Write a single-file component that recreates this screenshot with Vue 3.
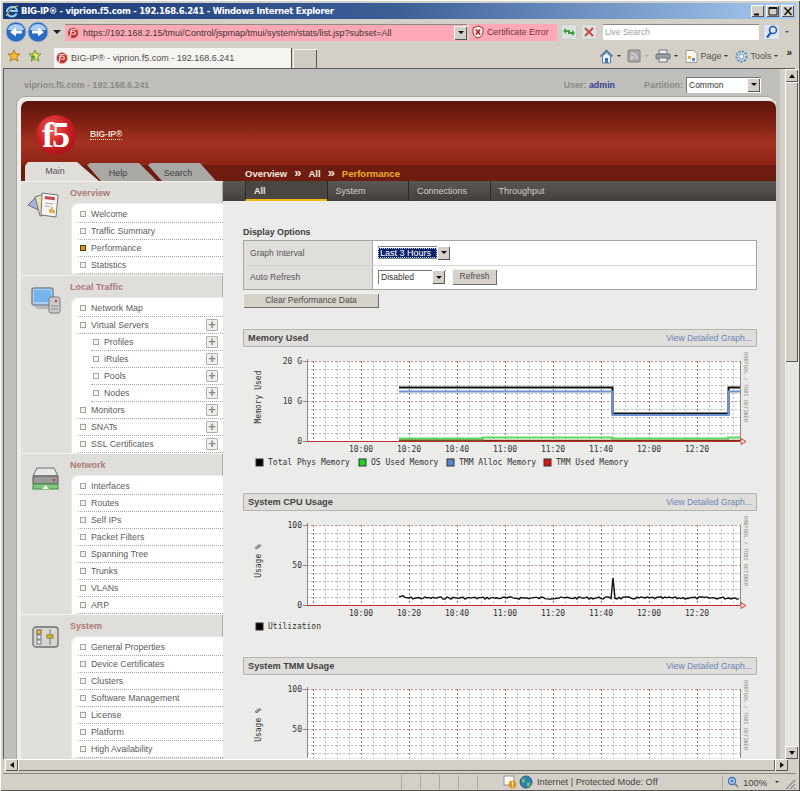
<script setup>
const sections = [
  { title: 'Overview', icon: 'docs', extra: true, items: [
    { t: 'Welcome' }, { t: 'Traffic Summary' }, { t: 'Performance', on: true }, { t: 'Statistics' } ] },
  { title: 'Local Traffic', icon: 'monitor', items: [
    { t: 'Network Map' }, { t: 'Virtual Servers', plus: true }, { t: 'Profiles', plus: true, sub: true },
    { t: 'iRules', plus: true, sub: true }, { t: 'Pools', plus: true, sub: true }, { t: 'Nodes', plus: true, sub: true },
    { t: 'Monitors', plus: true }, { t: 'SNATs', plus: true }, { t: 'SSL Certificates', plus: true } ] },
  { title: 'Network', icon: 'server', items: [
    { t: 'Interfaces' }, { t: 'Routes' }, { t: 'Self IPs' }, { t: 'Packet Filters' },
    { t: 'Spanning Tree' }, { t: 'Trunks' }, { t: 'VLANs' }, { t: 'ARP' } ] },
  { title: 'System', icon: 'system', items: [
    { t: 'General Properties' }, { t: 'Device Certificates' }, { t: 'Clusters' }, { t: 'Software Management' },
    { t: 'License' }, { t: 'Platform' }, { t: 'High Availability' } ] },
]
const subtabs = ['All', 'System', 'Connections', 'Throughput']
const vMinor = []
for (let k = 0; 70 + 12 * k < 497; k++) vMinor.push({ x: 70 + 12 * k + 0.5, major: k % 4 === 0 })
const hMinor = []
for (let k = 0; k <= 10; k++) hMinor.push({ y: 14 + 8 * k + 0.5, major: k % 5 === 0 })
const timeLabels = ['10:00', '10:20', '10:40', '11:00', '11:20', '11:40', '12:00', '12:20']

let seed = 7
const rnd = () => { seed = (seed * 9301 + 49297) % 233280; return seed / 233280 }
let cpu = ''
for (let x = 156; x <= 497; x += 2) {
  let y = 87 + (rnd() - 0.5) * 2.4
  if (x < 162) y -= 1.5
  if (x === 370) y = 67
  cpu += (cpu ? ' L' : 'M') + x + ' ' + y.toFixed(1)
}
const charts = [
  { title: 'Memory Used', yLabel: 'Memory Used', ticks: ['20 G', '10 G', '0'], series: 'mem', h: 146,
    legend: [['#000', 'Total Phys Memory', 13], ['#1fd51f', 'OS Used Memory', 116], ['#5b86d6', 'TMM Alloc Memory', 204], ['#d81414', 'TMM Used Memory', 301]] },
  { title: 'System CPU Usage', yLabel: 'Usage %', ticks: ['100', '50', '0'], series: 'cpu', h: 146, legend: [['#000', 'Utilization', 13]] },
  { title: 'System TMM Usage', yLabel: 'Usage %', ticks: ['100', '50'], series: 'none', h: 83, legend: [] },
]
</script>

<template>
  <div class="window">
    <div class="title">
      <svg class="ie" width="14" height="14" viewBox="0 0 14 14"><path d="M2 8a5 4.6 0 0 1 10-1H5.2M2.3 9.6A5 4.6 0 0 0 11.6 9.4" fill="none" stroke="#8cd0f5" stroke-width="2"/><path d="M1 12C3 8 8 2 13 2" fill="none" stroke="#f2c84b" stroke-width="1"/></svg>
      <span class="title-text">BIG-IP® - viprion.f5.com - 192.168.6.241 - Windows Internet Explorer</span>
      <span class="spacer"></span>
      <span class="winbtn"><svg width="12" height="11" viewBox="0 0 12 11"><path d="M2 8.5h5" stroke="#111" stroke-width="2"/></svg></span>
      <span class="winbtn"><svg width="12" height="11" viewBox="0 0 12 11"><path d="M2 1.5h8v7.5H2zM2 2.5h8" fill="none" stroke="#111"/></svg></span>
      <span class="winbtn close"><svg width="12" height="11" viewBox="0 0 12 11"><path d="M2.5 1.5l7 7.5M9.500 1.500l-7 7.500" stroke="#111" stroke-width="1.500"/></svg></span>
    </div>

    <div class="addr">
      <svg class="orb" width="22" height="22" viewBox="0 0 22 22"><circle cx="11" cy="11" r="10" fill="#2a6cc4" stroke="#9fb4cc"/><path d="M3 9a8 6 0 0 1 16 0" fill="#a9cdf3"/><path d="M17 9.500h-6v-3l-6 4.500 6 4.500v-3h6z" fill="#fff"/></svg>
      <svg class="orb second" width="22" height="22" viewBox="0 0 22 22"><circle cx="11" cy="11" r="10" fill="#2a6cc4" stroke="#9fb4cc"/><path d="M3 9a8 6 0 0 1 16 0" fill="#a9cdf3"/><path d="M5 9.500h6v-3l6 4.500-6 4.500v-3H5z" fill="#fff"/></svg>
      <span class="tri nav-tri"></span>
      <div class="urlbox">
        <span class="fav"><span>f5</span></span>
        <span class="url">https://192.168.2.15/tmui/Control/jspmap/tmui/system/stats/list.jsp?subset=All</span>
        <span class="dropbtn"><i></i></span>
      </div>
      <div class="cert">
        <svg width="12" height="14" viewBox="0 0 12 14"><path d="M6 1l5 2v4c0 3-2 5-5 6-3-1-5-3-5-6V3z" fill="#f4f0ec" stroke="#8c3a3a"/><path d="M3.800 4.500l4.400 5M8.200 4.500l-4.400 5" stroke="#c01818" stroke-width="1.600"/></svg>
        <span>Certificate Error</span>
      </div>
      <span class="toolbtn r"><svg width="14" height="12" viewBox="0 0 14 12"><path d="M1 5l3-3v2h4v2H4v2zM13 7l-3 3V8H6V6h4V4z" fill="#3aa03a"/></svg></span>
      <span class="toolbtn s"><svg width="12" height="12" viewBox="0 0 12 12"><path d="M2 2l8 8M10 2l-8 8" stroke="#c8443c" stroke-width="1.800"/></svg></span>
      <div class="search">Live Search</div>
      <span class="toolbtn mag"><svg width="13" height="14" viewBox="0 0 13 14"><circle cx="8" cy="5" r="3.500" fill="#dfeafa" stroke="#2458b0" stroke-width="1.600"/><path d="M5.500 8l-3.500 4.500" stroke="#2458b0" stroke-width="2.200"/></svg></span>
      <span class="mini-drop"><i class="tri small"></i></span>
    </div>

    <div class="tabrow">
      <svg class="star" width="14" height="14" viewBox="0 0 14 14"><path d="M7 1l1.800 4h4.200l-3.300 2.800 1.200 4.400L7 9.800l-3.900 2.400 1.200-4.400L1 5h4.200z" fill="#f3bf3a" stroke="#b8781e"/></svg>
      <svg class="star two" width="14" height="14" viewBox="0 0 14 14"><path d="M7 1l1.800 4h4.200l-3.300 2.800 1.200 4.400L7 9.800l-3.900 2.400 1.200-4.400L1 5h4.200z" fill="#f3dd6a" stroke="#6a9a2e"/><path d="M3 8h4M5 6v4" stroke="#3ea23e" stroke-width="1.500"/></svg>
      <div class="pagetab"><span class="fav"><span>f5</span></span><span class="pagetab-t">BIG-IP® - viprion.f5.com - 192.168.6.241</span></div>
      <div class="newtab"></div>
      <span class="spacer"></span>
      <div class="cmds">
        <svg width="15" height="15" viewBox="0 0 15 15"><path d="M1.500 7.500L7.500 1.500l6 6" fill="none" stroke="#3e6ea8" stroke-width="1.500"/><path d="M3.500 7v7h8V7L7.500 3.500z" fill="#eef2f6" stroke="#5b7ea6"/><rect x="6" y="9" width="3" height="5" fill="#3f78b8"/></svg>
        <i class="tri small"></i>
        <svg width="14" height="14" viewBox="0 0 14 14"><rect x="1" y="1" width="12" height="12" rx="1" fill="#a8a9a8" stroke="#7e7f7e"/><path d="M4 4c3 0 6 3 6 6M4 7c1.500 0 3 1.500 3 3" fill="none" stroke="#e4e4e4" stroke-width="1.200"/><circle cx="4.500" cy="9.500" r="1" fill="#e4e4e4"/></svg>
        <i class="tri small faint"></i>
        <svg width="16" height="14" viewBox="0 0 16 14"><rect x="4" y="1" width="8" height="4" fill="#eee" stroke="#777"/><rect x="1" y="5" width="14" height="5" rx="1" fill="#99a1aa" stroke="#69717a"/><rect x="4" y="9" width="8" height="4" fill="#eee" stroke="#777"/></svg>
        <i class="tri small"></i>
        <svg width="15" height="15" viewBox="0 0 15 15"><path d="M2 1.500h8l3 3v9H2z" fill="#f7f6f1" stroke="#9a9d9f"/><rect x="4" y="7" width="3" height="3" fill="#e2b23c"/><rect x="8" y="9" width="3" height="3" fill="#5c8fd0"/></svg>
        <span class="cmd-t">Page</span>
        <i class="tri small"></i>
        <svg width="15" height="15" viewBox="0 0 15 15"><circle cx="7.500" cy="7.500" r="5" fill="#dbe6ef" stroke="#6e95bd" stroke-width="2.400" stroke-dasharray="2.200 1.100"/><circle cx="7.500" cy="7.500" r="2.400" fill="#f1f5f8" stroke="#7a97b2"/></svg>
        <span class="cmd-t">Tools</span>
        <i class="tri small"></i>
        <span class="chev">»</span>
      </div>
    </div>

    <div class="viewport">
      <div class="page">
        <div class="pagehead">
          <span class="host">viprion.f5.com - 192.168.6.241</span>
          <span class="spacer"></span>
          <span class="user">User: <b>admin</b></span>
          <span class="part">Partition:</span>
          <span class="sel partsel"><span>Common</span><span class="dropbtn"><i></i></span></span>
        </div>
        <div class="card">
          <div class="inner">
            <div class="banner">
              <div class="brand">
                <span class="logo">f5</span>
                <span class="bigip">BIG-IP®</span>
              </div>
              <div class="navstrip">
                <div class="tabs">
                  <span class="tab main">Main</span>
                  <span class="tab help">Help</span>
                  <span class="tab srch">Search</span>
                </div>
                <div class="crumb"><b>Overview</b><em>»</em><b>All</b><em>»</em><b class="cur">Performance</b></div>
              </div>
            </div>
            <div class="body">
              <aside class="side">
                <section v-for="(s, i) in sections" :key="s.title" class="sec" :class="{ extra: s.extra }">
                  <div class="iconcol">
                    <svg v-if="s.icon === 'docs'" class="ic-docs" width="36" height="28" viewBox="0 0 36 28">
                      <path d="M1 14L10 5l6 16z" fill="#a7b2e0" stroke="#676a86"/>
                      <path d="M8 6l9-3 5 20-9 2z" fill="#e8dfae" stroke="#767676"/>
                      <path d="M15 2l16 2-2 22-15-2z" fill="#f7f5f0" stroke="#777"/>
                      <path d="M18 5l10 1.200-.3 3-10-1.200z" fill="#c8484a"/>
                      <path d="M18 12l8 1M17.500 15l5 .6" stroke="#aaa"/>
                      <path d="M23 22v-4M25 22v-6M27 22v-3" stroke="#d89a2a" stroke-width="1.500"/>
                    </svg>
                    <svg v-else-if="s.icon === 'monitor'" class="ic-mon" width="30" height="27" viewBox="0 0 30 27">
                      <rect x="1" y="1" width="21" height="17" rx="2" fill="#aacdf0" stroke="#7a8796" stroke-width="1.500"/>
                      <rect x="3" y="3" width="17" height="12" fill="#74b4ef"/>
                      <path d="M3 19h19l2 3H6z" fill="#b5b7b8"/>
                      <rect x="18" y="10" width="11" height="16" rx="2" fill="#c9cac9" stroke="#7b7b7b"/>
                      <circle cx="25" cy="14" r="1.200" fill="#b84444"/>
                      <path d="M20 19h7M20 22h7" stroke="#8e8e8e"/>
                    </svg>
                    <svg v-else-if="s.icon === 'server'" class="ic-srv" width="27" height="23" viewBox="0 0 27 23">
                      <path d="M5 1h17l4 8H1z" fill="#e6e6e4" stroke="#6f6f6f"/>
                      <rect x="1" y="9" width="25" height="8" rx="1" fill="#98999a" stroke="#555"/>
                      <circle cx="22" cy="13" r="1.300" fill="#c24040"/>
                      <rect x="1" y="17" width="25" height="5" fill="#7fc77f" stroke="#3e8e3e"/>
                      <path d="M10 22l3.500-4 3.500 4z" fill="#f4f4f2"/>
                    </svg>
                    <svg v-else class="ic-sys" width="27" height="22" viewBox="0 0 27 22">
                      <rect x="1" y="1" width="25" height="20" rx="3" fill="#d7d6d2" stroke="#6f6f6f" stroke-width="1.300"/>
                      <rect x="5" y="4" width="4" height="4" fill="#eec84a" stroke="#76693a"/>
                      <rect x="5" y="9" width="4" height="4" fill="#eee" stroke="#777"/>
                      <rect x="5" y="14" width="4" height="4" fill="#eee" stroke="#777"/>
                      <path d="M18 3v16" stroke="#777"/>
                      <rect x="15" y="9" width="6" height="3" fill="#e2c22c" stroke="#8a7a22"/>
                    </svg>
                  </div>
                  <div class="seccol">
                    <div class="sechead">{{ s.title }}</div>
                    <div class="panel">
                      <div v-for="it in s.items" :key="it.t" class="row" :class="{ sub: it.sub }">
                        <span class="sq" :class="{ on: it.on }"></span>
                        <span class="lbl">{{ it.t }}</span>
                        <span v-if="it.plus" class="plus">+</span>
                      </div>
                    </div>
                  </div>
                </section>
              </aside>
              <main class="main">
                <div class="subnav">
                  <span v-for="(t, i) in subtabs" :key="t" class="subtab" :class="{ active: i === 0 }">{{ t }}</span>
                </div>
                <div class="content">
                  <div class="opt-title">Display Options</div>
                  <div class="opts">
                    <div class="opt-row">
                      <div class="opt-l">Graph Interval</div>
                      <div class="opt-v"><span class="sel hl"><span class="hltxt">Last 3 Hours</span><span class="dropbtn"><i></i></span></span></div>
                    </div>
                    <div class="opt-row">
                      <div class="opt-l">Auto Refresh</div>
                      <div class="opt-v"><span class="sel dis"><span>Disabled</span><span class="dropbtn"><i></i></span></span><span class="btn ref">Refresh</span></div>
                    </div>
                  </div>
                  <div class="btn clear">Clear Performance Data</div>
                  <div class="charts">
                    <div v-for="c in charts" :key="c.title" class="chart">
                      <div class="chart-h"><b>{{ c.title }}</b><a>View Detailed Graph...</a></div>
                      <svg width="514" :height="c.h" :viewBox="'0 0 514 ' + c.h" class="graph">
                        <rect x="64" y="14" width="433" height="80" fill="#fff"/>
                        <line v-for="h in hMinor" :key="'h' + h.y" x1="64" x2="497" :y1="h.y" :y2="h.y" :stroke="h.major ? '#c98a84' : '#bcbcbc'" stroke-dasharray="2 2"/>
                        <line v-for="v in vMinor" :key="'v' + v.x" :x1="v.x" :x2="v.x" y1="14" y2="94" :stroke="v.major ? '#a5705f' : '#bcbcbc'" stroke-dasharray="2 2"/>
                        <path d="M64.500 12V94M60 14.500h4M60 54.500h4M60 94.500h4M497.500 14V94" stroke="#8a8a8a" fill="none"/>
                        <g v-if="c.series === 'mem'" fill="none">
                          <path d="M156 91.500h84V90.500H369V91.500H485V90.500H497" stroke="#58dc58" stroke-width="2"/>
                          <path d="M156 93.500h84" stroke="#5e5a20" stroke-width="2"/>
                          <path d="M240 93.500H497" stroke="#7a3020" stroke-width="1.500"/>
                          <path d="M156 40.500H369.500V66.500H485.500V40.500H497" stroke="#111" stroke-width="2"/>
                          <path d="M156 44.500H369.500V68H485.500V44.500H497" stroke="#6d93d4" stroke-width="2"/>
                        </g>
                        <path v-if="c.series === 'cpu'" :d="cpu" fill="none" stroke="#111" stroke-width="1.400"/>
                        <g v-if="c.series !== 'none'">
                          <path d="M64 94.500h433" stroke="#b8322a"/>
                          <path d="M498 91.500l5 3-5 3z" fill="none" stroke="#d83a30"/>
                          <text x="59" y="97" class="mono ax" text-anchor="end">{{ c.ticks[2] }}</text>
                          <text v-for="(t, i) in timeLabels" :key="t" :x="118 + 48 * i" y="105" class="mono ax" text-anchor="middle">{{ t }}</text>
                        </g>
                        <text x="59" y="17" class="mono ax" text-anchor="end">{{ c.ticks[0] }}</text>
                        <text x="59" y="57" class="mono ax" text-anchor="end">{{ c.ticks[1] }}</text>
                        <text transform="translate(18 50) rotate(-90)" class="mono ax" text-anchor="middle">{{ c.yLabel }}</text>
                        <text transform="translate(501 5) rotate(90)" class="mono rrd">RRDTOOL / TOBI OETIKER</text>
                        <g v-for="l in c.legend" :key="l[1]">
                          <rect :x="l[2]" y="112" width="7" height="7" :fill="l[0]" stroke="#333"/>
                          <text :x="l[2] + 12" y="118" class="mono ax">{{ l[1] }}</text>
                        </g>
                      </svg>
                    </div>
                  </div>
                </div>
              </main>
            </div>
          </div>
        </div>
      </div>
      <div class="vscroll">
        <span class="sbtn"><i class="up"></i></span>
        <span class="thumb"></span>
        <span class="track"></span>
        <span class="sbtn"><i class="down"></i></span>
      </div>
    </div>

    <div class="hscroll">
      <span class="sbtn"><i class="left"></i></span>
      <span class="hthumb"></span>
      <span class="sbtn"><i class="right"></i></span>
      <span class="corner"></span>
    </div>

    <div class="status">
      <span class="spacer"></span>
      <span class="cell"></span><span class="cell"></span><span class="cell"></span><span class="cell"></span><span class="cell"></span>
      <svg class="warn" width="14" height="14" viewBox="0 0 14 14"><rect x="1" y="1" width="10" height="9" fill="#fbfbf6" stroke="#8f949a"/><circle cx="9.500" cy="9.500" r="4" fill="#e49a2a"/><path d="M9.500 7v3M9.500 11v1" stroke="#fff"/></svg>
      <svg class="globe" width="14" height="14" viewBox="0 0 14 14"><circle cx="7" cy="7" r="6" fill="#2f7fb0" stroke="#2a5f80"/><path d="M3 4c2-1 3 0 3 2s-2 2-3 1zM8 8c2-1 4 0 3 2s-3 2-3 0z" fill="#7ac06a"/></svg>
      <span class="zone">Internet | Protected Mode: Off</span>
      <span class="stat-zoom">
        <svg width="12" height="12" viewBox="0 0 12 12"><circle cx="5" cy="5" r="3.500" fill="#d6e6f8" stroke="#3c72b8" stroke-width="1.400"/><path d="M7.500 7.500l3.500 3.500" stroke="#8a8a8a" stroke-width="2"/><path d="M3 5h4M5 3v4" stroke="#2d62b0"/></svg>
        <span>100%</span>
        <i class="tri small"></i>
      </span>
      <svg class="grip" width="12" height="12" viewBox="0 0 12 12"><path d="M11 2L2 11M11 6l-5 5M11 10l-1 1" stroke="#8f8c84" stroke-width="1.200"/></svg>
    </div>
  </div>
</template>

<style scoped>
.window { width: 800px; height: 791px; overflow: hidden; box-sizing: border-box; padding: 3px 4px 2px 3px; background: #d4d0c8; box-shadow: inset 0 1px 0 #fff, inset 1px 0 0 #fff, inset 0 -1px 0 #555, inset -1px 0 0 #555; display: flex; flex-direction: column; font-family: "Liberation Sans", Arial, sans-serif; color: #333; position: relative; }
.spacer { flex: 1; }
.title { height: 16px; flex: none; display: flex; align-items: center; background: linear-gradient(90deg, #1b3a78 0%, #3c5f98 50%, #a6caf0 100%); padding: 0 2px; }
.ie { margin-right: 2px; }
.title-text { font-family: "DejaVu Sans", sans-serif; font-weight: 700; font-size: 8.500px; color: #fff; letter-spacing: -.3px; white-space: nowrap; }
.winbtn { width: 13px; height: 12px; margin-left: 2px; background: #d4d0c8; box-shadow: inset 1px 1px 0 #fff, inset -1px -1px 0 #555; display: flex; align-items: center; justify-content: center; }
.addr { height: 24px; flex: none; margin-top: 1px; display: flex; align-items: center; padding-left: 2px; }
.orb { flex: none; }
.tri { display: inline-block; width: 0; height: 0; border: 3px solid transparent; border-top: 3px solid #222; border-bottom: 0; }
.tri.small { border-width: 2.500px; border-bottom: 0; border-top-color: #333; margin: 0 6px 0 3px; }
.tri.faint { border-top-color: #aaa; margin-left: 4px; }
.nav-tri { margin: 0 4px; border-width: 4px; border-bottom: 0; }
.urlbox { width: 402px; height: 17px; flex: none; background: #ffa9b6; border-top: 1px solid #8c8a84; display: flex; align-items: center; box-sizing: border-box; padding-left: 2px; }
.fav { width: 12px; height: 12px; border-radius: 50%; background: #c12a2a; border: 1px solid #d8b5b5; box-sizing: border-box; flex: none; display: inline-flex; align-items: center; justify-content: center; overflow: hidden; }
.fav span { color: #fff; font: italic 700 8px/1 "Liberation Serif", serif; }
.url { margin-left: 4px; font-size: 9px; color: #3b3436; white-space: nowrap; flex: 1; }
.dropbtn { width: 13px; height: 14px; flex: none; background: #d4d0c8; box-shadow: inset 1px 1px 0 #fff, inset -1px -1px 0 #555; display: inline-flex; align-items: center; justify-content: center; }
.dropbtn i { border: 3px solid transparent; border-top: 3px solid #111; border-bottom: 0; }
.cert { width: 88px; height: 17px; margin-left: 2px; flex: none; background: #ffa9b6; display: flex; align-items: center; gap: 3px; padding-left: 3px; box-sizing: border-box; font-size: 8.800px; color: #70303a; white-space: nowrap; }
.toolbtn { height: 16px; flex: none; border-radius: 2px; background: #dde0df; box-shadow: inset 0 0 0 1px #c8ccd0; display: flex; align-items: center; justify-content: center; }
.toolbtn.r { width: 16px; margin-left: 4px; }
.toolbtn.s { width: 16px; margin-left: 4px; }
.toolbtn.mag { width: 17px; margin-left: 4px; background: #dfe6f0; }
.search { width: 156px; height: 16px; margin-left: 6px; flex: none; background: #fff; border-top: 1px solid #888; box-sizing: border-box; padding: 2px 2px; font-size: 8.500px; color: #a0a0a0; }
.mini-drop { margin-left: 1px; display: flex; }
.mini-drop .tri { border-top-color: #39608c; margin: 0 4px; }
.tabrow { height: 24px; flex: none; display: flex; align-items: flex-end; padding-left: 1px; }
.star { margin: 0 0 5px 3px; flex: none; }
.star.two { margin-left: 7px; }
.pagetab { width: 238px; height: 20px; flex: none; margin-left: 12px; background: #f5f4f0; box-shadow: inset -1px 0 0 #555; display: flex; align-items: center; gap: 3px; padding-left: 2px; box-sizing: border-box; font-size: 9px; color: #4d4d4d; white-space: nowrap; }
.newtab { width: 24px; height: 19px; margin-left: 1px; flex: none; box-shadow: inset 1px 1px 0 #f3f2ee, inset -1px 0 0 #555; background: #d0ccc4; }
.cmds { align-self: center; display: flex; align-items: center; font-size: 9px; color: #555; }
.cmd-t { margin-left: 1px; }
.chev { font-size: 10px; font-weight: 700; margin: -8px 4px 0 2px; color: #222; }
.viewport { flex: none; height: 691px; display: flex; box-shadow: inset 1px 1px 0 #5b5b5b; padding-left: 1px; padding-top: 1px; box-sizing: border-box; margin-right: 1px; }
.page { width: 776px; flex: none; background: #c0bfbb; overflow: hidden; display: flex; flex-direction: column; }
.pagehead { height: 27px; flex: none; display: flex; align-items: center; padding: 4px 19px 0 20px; box-sizing: border-box; font-size: 8.900px; font-weight: 700; color: #8b8a87; }
.user b { color: #3a3c94; }
.user { margin-right: 29px; }
.part { margin-right: 3px; }
.sel { display: inline-flex; align-items: center; justify-content: space-between; background: #fff; font-weight: 400; font-size: 8.500px; color: #333; box-sizing: border-box; box-shadow: inset 1px 1px 0 #777; padding: 0 1px 0 3px; white-space: nowrap; }
.partsel { width: 75px; height: 16px; }
.card { flex: none; margin-left: 12px; width: 760px; padding: 4px 0 0 4px; box-sizing: border-box; background: #eeedea; border: 1px solid #a8a7a3; border-bottom: 0; border-radius: 9px 9px 0 0; }
.inner { width: 755px; background: #dfdedb; }
.banner { height: 80px; border-radius: 7px 7px 0 0; background: linear-gradient(180deg, #5c140b 0, #7e2012 20px, #a33120 42px, #8d2416 64px, #6e1c10 64px, #6e1c10 80px); display: flex; flex-direction: column; overflow: hidden; }
.brand { height: 61px; flex: none; display: flex; align-items: center; padding-left: 15px; padding-top: 6px; box-sizing: border-box; }
.logo { width: 40px; height: 40px; border-radius: 50%; flex: none; background: radial-gradient(circle at 40% 35%, #f0605a 0, #cc1f24 45%, #8c1015 100%); color: #fff; display: flex; align-items: center; justify-content: center; font: 700 36px/1 "Liberation Serif", serif; letter-spacing: -2px; padding-right: 2px; box-sizing: border-box; }
.bigip { margin-left: 14px; font-size: 8.500px; font-weight: 700; color: #f2dcd0; border-bottom: 1px dotted #f0e0c8; }
.navstrip { height: 19px; flex: none; display: flex; }
.tabs { width: 224px; flex: none; display: flex; padding-left: 4px; box-sizing: border-box; }
.tab { display: block; height: 19px; font-size: 9px; color: #444; text-align: center; line-height: 19px; box-sizing: border-box; }
.tab.main { width: 74px; margin-right: -12px; background: #dfdedb; clip-path: polygon(0 100%, 0 4px, 3px 0, 52px 0, 100% 100%); padding-right: 14px; position: relative; z-index: 2; color: #555; }
.tab.help { width: 70px; background: #a9a8a4; box-shadow: inset 0 1px 0 #3b1a14; clip-path: polygon(0 3px, 3px 1px, 52px 1px, 100% 100%, 14px 100%); margin-right: -9px; padding: 2px 8px 0 0; position: relative; z-index: 1; }
.tab.srch { width: 68px; background: #a9a8a4; clip-path: polygon(0 3px, 3px 1px, 52px 1px, 100% 100%, 14px 100%); padding: 2px 8px 0 0; }
.crumb { display: flex; align-items: center; height: 19px; padding-top: 3px; box-sizing: border-box; font-size: 9.500px; color: #f2e6dc; }
.crumb b { font-weight: 700; }
.crumb em { font-style: normal; font-weight: 700; margin: 0 7px; font-size: 13px; line-height: 10px; }
.crumb .cur { color: #f0b020; }
.body { display: flex; height: 579px; overflow: hidden; }
.side { width: 202px; flex: none; background: #dfdedb; overflow: hidden; box-shadow: inset -1px 0 0 #aaa; }
.sec { display: flex; box-shadow: inset 0 1px 0 #f2f1ee; }
.sec.extra { padding-bottom: 1px; }
.iconcol { width: 50px; flex: none; }
.iconcol svg { display: block; }
.ic-docs { margin: 10px 0 0 6px; }
.ic-mon { margin: 12px 0 0 10px; }
.ic-srv { margin: 14px 0 0 11px; }
.ic-sys { margin: 12px 0 0 11px; }
.seccol { flex: 1; min-width: 0; }
.sechead { height: 22px; line-height: 24px; font-size: 9px; font-weight: 700; color: #ae7a78; margin-left: -1px; }
.panel { background: #fff; border-radius: 7px 0 0 0; padding-top: 3px; box-shadow: inset 1px 1px 0 #e9e8e5; }
.row { height: 17px; box-sizing: border-box; display: flex; align-items: center; margin-left: 7px; border-bottom: 1px dotted #a6a6a6; font-size: 8.800px; color: #5b5b5b; position: relative; }
.row.sub { margin-left: 20px; }
.sq { width: 4px; height: 4px; border: 1px solid #a5a5a1; background: #f4f4f1; flex: none; margin: 0 5px 0 2px; }
.sq.on { background: #d89a10; border-color: #4a3c10; }
.lbl { white-space: nowrap; }
.plus { position: absolute; right: 5px; top: 2px; width: 12px; height: 12px; box-sizing: border-box; border: 1px solid #b0b0ac; border-radius: 1px; background: #efefec; color: #8a8a87; font-size: 13px; font-weight: 700; line-height: 9px; text-align: center; }
.main { width: 553px; flex: none; background: #ebebe9; display: flex; flex-direction: column; overflow: hidden; }
.subnav { height: 20px; flex: none; display: flex; padding-left: 22px; background: linear-gradient(180deg, #5b5853, #44413c); }
.subtab { width: 81.500px; box-sizing: border-box; padding-left: 8px; line-height: 20px; font-size: 9px; color: #d0cec8; border-left: 1px solid #2c2a27; }
.subtab.active { font-weight: 700; color: #ecebe6; border-bottom: 2px solid #f0bc14; background: #4a4742; }
.content { padding: 24px 19px 0 20px; }
.opt-title { height: 15px; line-height: 15px; font-size: 8.900px; font-weight: 700; color: #3c3c3c; }
.opts { width: 514px; border: 1px solid #a6a5a1; box-sizing: border-box; height: 50px; display: flex; flex-direction: column; }
.opt-row { flex: 1; display: flex; }
.opt-row + .opt-row { border-top: 1px solid #d4d3cf; }
.opt-l { width: 129px; background: #dfdedb; box-sizing: border-box; padding: 0 6px; font-size: 8.600px; color: #555; display: flex; align-items: center; border-right: 1px solid #a6a5a1; }
.opt-v { flex: 1; background: #fff; display: flex; align-items: center; padding-left: 5px; }
.sel.hl { width: 72px; height: 13px; padding: 0; box-shadow: inset 0 0 0 1px #888; font-size: 9px; }
.hltxt { background: #0a246a; color: #fff; padding: 0 1px 0 2px; flex: 1; outline: 1px dotted #ccc; outline-offset: -1px; }
.sel.dis { width: 68px; height: 14px; }
.btn { background: #d6d2ca; box-shadow: inset 1px 1px 0 #f4f3ee, inset -1px -1px 0 #716f6a; font-size: 8.500px; color: #4b4b4b; text-align: center; box-sizing: border-box; }
.btn.ref { width: 45px; height: 16px; line-height: 15px; margin-left: 6px; }
.btn.clear { width: 136px; height: 15px; line-height: 15px; margin-top: 3px; }
.charts { margin-top: 21px; }
.chart { width: 514px; }
.chart-h { height: 18px; box-sizing: border-box; border: 1px solid #b5b4b0; background: #dfdedb; padding: 0 4px; display: flex; justify-content: space-between; align-items: center; font-size: 9.200px; }
.chart-h b { color: #444; }
.chart-h a { color: #6d84b6; font-size: 8.600px; }
.graph { display: block; }
.mono { font-family: "DejaVu Sans Mono", monospace; }
.ax { font-size: 8px; fill: #333; }
.rrd { font-size: 5.300px; fill: #8b8b8b; }
.vscroll { width: 14px; flex: none; margin-left: 5px; display: flex; flex-direction: column; background: #e8e6e0; }
.sbtn { width: 13px; height: 13px; flex: none; background: #d4d0c8; box-shadow: inset 1px 1px 0 #fff, inset -1px -1px 0 #555; display: flex; align-items: center; justify-content: center; }
.sbtn i { width: 0; height: 0; border: 3px solid transparent; }
.sbtn .up { border-top: 0; border-bottom: 4px solid #111; }
.sbtn .down { border-bottom: 0; border-top: 4px solid #111; }
.sbtn .left { border-left: 0; border-right: 4px solid #111; }
.sbtn .right { border-right: 0; border-left: 4px solid #111; }
.thumb { height: 280px; flex: none; width: 13px; background: #d4d0c8; box-shadow: inset 1px 1px 0 #fff, inset -1px -1px 0 #555; }
.track { flex: 1; }
.hscroll { height: 12px; flex: none; display: flex; margin: 0 1px 0 2px; }
.hscroll .sbtn { height: 12px; }
.hthumb { width: 757px; background: #d4d0c8; box-shadow: inset 1px 1px 0 #fff, inset -1px -1px 0 #666; }
.corner { flex: 1; }
.status { flex: none; height: 16px; margin-top: 3px; display: flex; align-items: center; box-shadow: 0 -1px 0 #8a8882; font-size: 9.200px; color: #444; }
.cell { width: 19px; height: 15px; box-sizing: border-box; border-left: 1px solid #aaa; }
.warn { margin: 0 2px 0 7px; flex: none; }
.globe { flex: none; }
.zone { margin-left: 4px; width: 185px; white-space: nowrap; }
.stat-zoom { display: flex; align-items: center; border-left: 1px solid #aaa; padding-left: 4px; height: 15px; width: 62px; box-sizing: border-box; font-size: 9.500px; }
.stat-zoom svg { flex: none; margin-right: 4px; }
.stat-zoom .tri { margin: 0 0 0 8px; flex: none; }
.grip { flex: none; margin: 3px 0 0 0; }
</style>
